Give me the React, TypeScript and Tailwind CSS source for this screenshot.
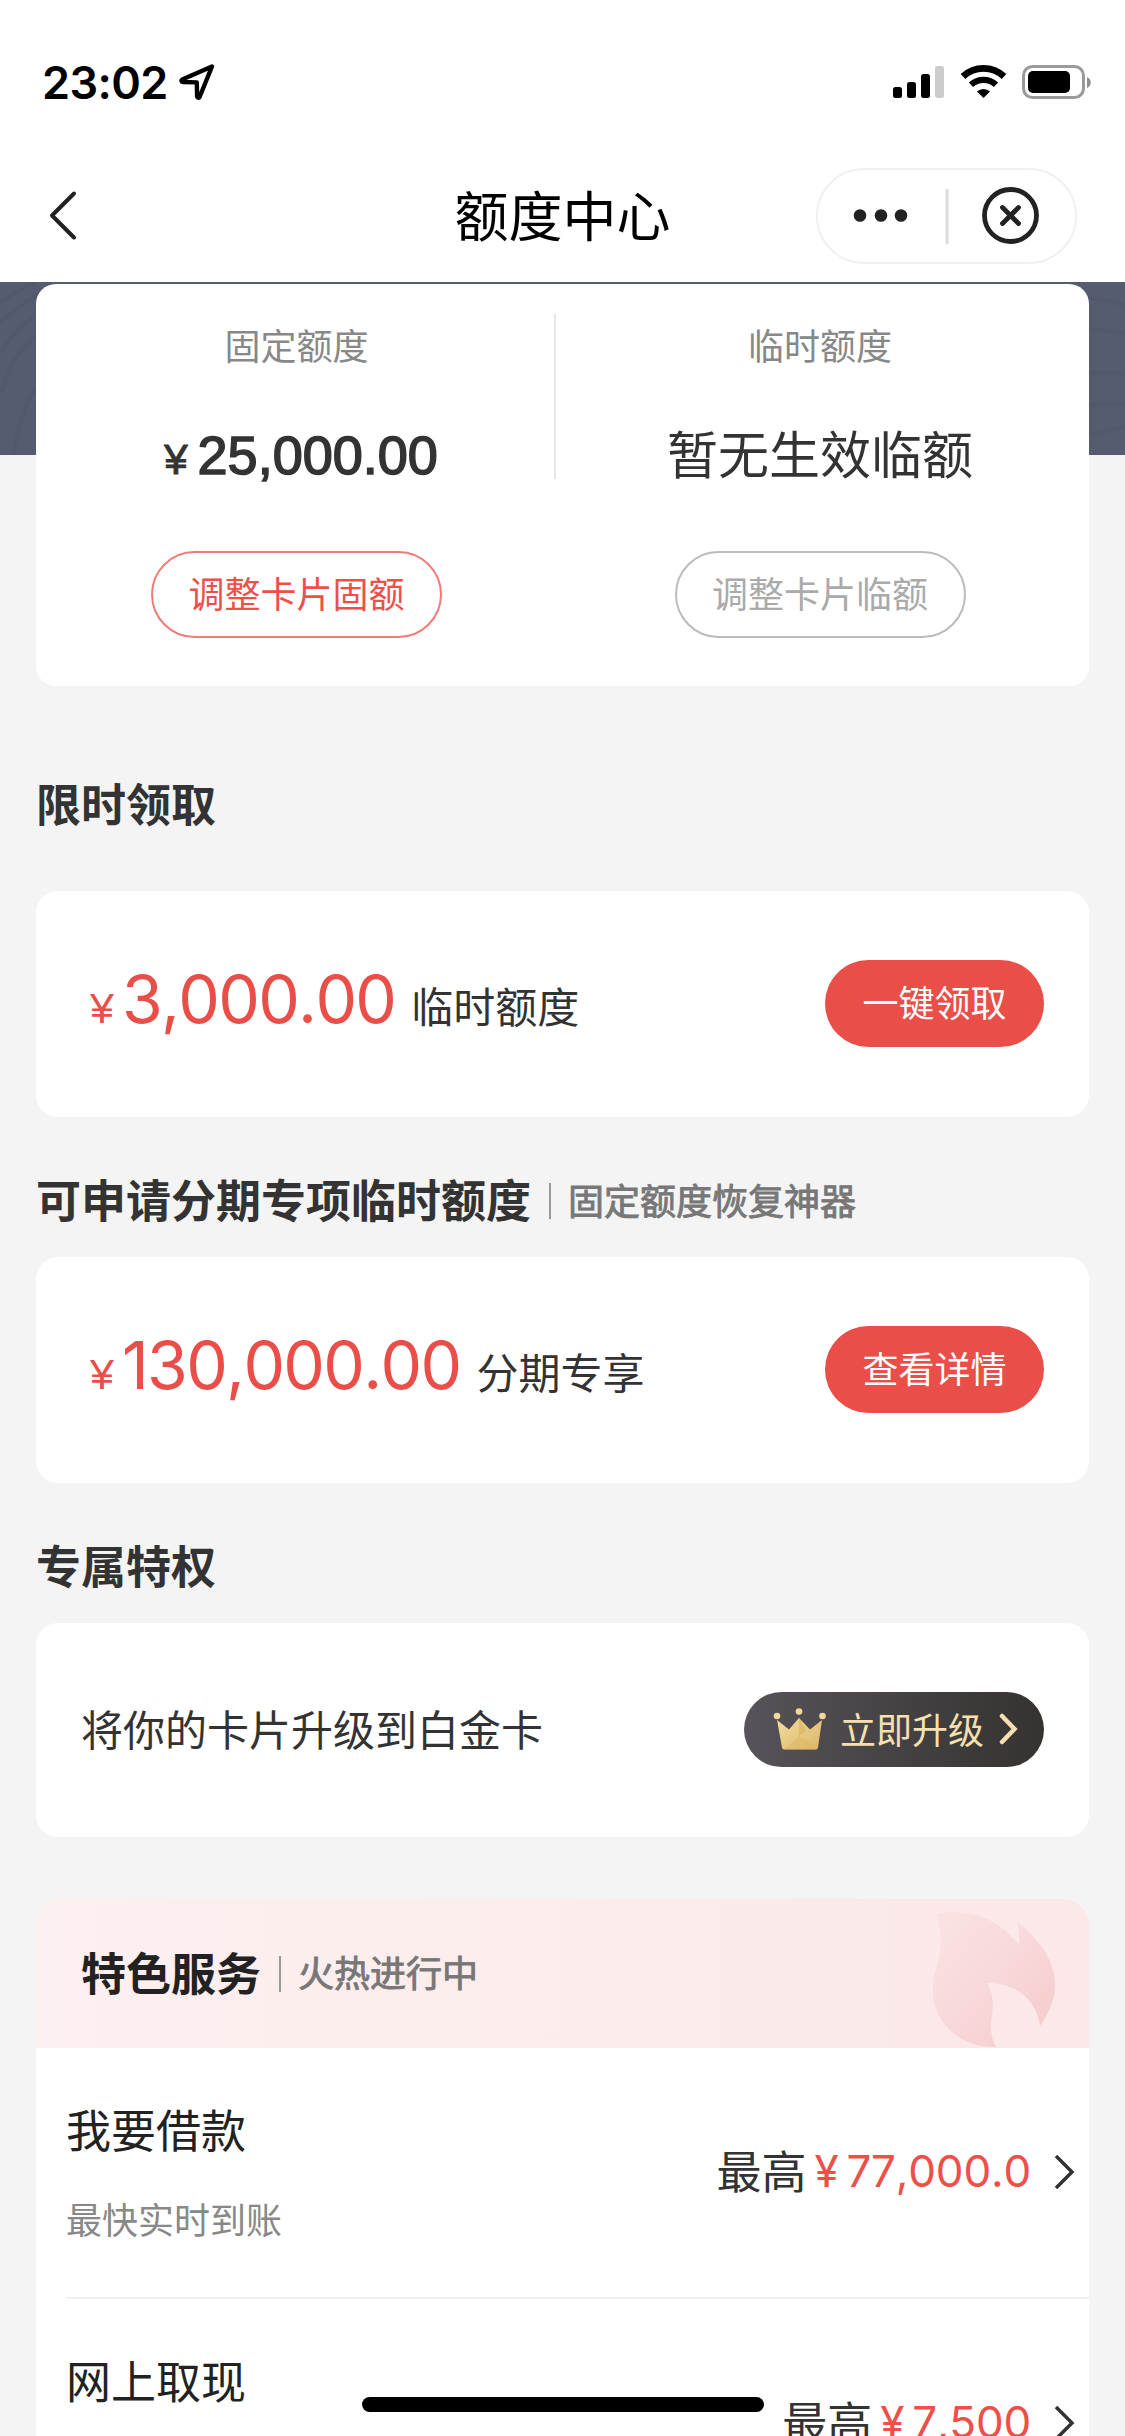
import type { ReactNode } from "react";

function StatusBar() {
  return (
    <div className="flex h-[164px] items-center justify-between pl-[42px] pr-[34px]">
      <div className="flex items-center">
        <span className="font-['Inter',sans-serif] text-[45px] font-semibold leading-none tracking-[-0.6px] text-black">
          23:02
        </span>
        <svg className="ml-[11px] h-9 w-9" viewBox="0 0 36 36" fill="none">
          <path
            d="M33 2.500 3.200 15.600c-1.200.6-.9 2.300.6 2.400l14 .4.3 14c.1 1.500 1.900 1.800 2.500.6Z"
            stroke="#000"
            strokeWidth="4.400"
            strokeLinejoin="round"
          />
        </svg>
      </div>
      <svg className="h-9 w-[200px]" viewBox="0 0 200 36">
        <rect x="2" y="23" width="9" height="11" rx="2.500" />
        <rect x="16" y="18" width="9" height="16" rx="2.500" />
        <rect x="30" y="10" width="9" height="24" rx="2.500" />
        <rect x="44" y="2" width="9" height="32" rx="2.500" fill="#ccc" />
        <g fill="none" stroke="#000">
          <path d="M72 12.500a30 30 0 0 1 41 0" strokeWidth="6.800" />
          <path d="M80 20.800a18.500 18.500 0 0 1 25 0" strokeWidth="6.200" />
        </g>
        <path d="M86 27.600a9.500 9.500 0 0 1 13 0L92.500 34Z" />
        <rect x="132.500" y="2.500" width="60" height="31" rx="9" fill="none" stroke="#9a9a9a" strokeWidth="3" />
        <rect x="137" y="7" width="42" height="22" rx="5" />
        <path d="M196 13v11c5-1.700 5-9.300 0-11Z" fill="#8f8f8f" />
      </svg>
    </div>
  );
}

function NavBar() {
  return (
    <div className="grid h-[104px] grid-cols-3 items-center px-12">
      <svg className="h-14 w-9" viewBox="0 0 36 56" fill="none">
        <path d="M26 5.500 4 27.500l22 22" stroke="#222" strokeWidth="4" strokeLinecap="round" strokeLinejoin="round" />
      </svg>
      <h1 className="pb-[5px] text-center text-[54px] leading-none text-black">额度中心</h1>
      <div className="flex h-24 w-[261px] items-center justify-self-end rounded-full border-2 border-[#f0f0f0]">
        <svg className="h-full w-full" viewBox="0 0 257 92" fill="none">
          <g fill="#222">
            <circle cx="42" cy="45.500" r="6.300" />
            <circle cx="63" cy="45.500" r="6.300" />
            <circle cx="83" cy="45.500" r="6.300" />
          </g>
          <path d="M129 20v53" stroke="#ddd" strokeWidth="3" strokeLinecap="round" />
          <circle cx="192.500" cy="45.500" r="26" stroke="#222" strokeWidth="4.800" />
          <path d="m184.500 37.500 16 16m0-16-16 16" stroke="#222" strokeWidth="4.800" strokeLinecap="round" />
        </svg>
      </div>
    </div>
  );
}

// 卡片背后的深色纹理底
function Backdrop() {
  return (
    <svg className="absolute inset-x-0 top-0 h-[173px] w-full" viewBox="0 0 1125 173" fill="none">
      <rect width="1125" height="173" fill="#565c70" />
      <g stroke="#4f556a" strokeWidth="4" opacity="0.4">
        <path d="M-4 22C10 14 20 8 36 0" />
        <path d="M-4 44C10 32 24 20 40 12" />
        <path d="M-4 76C8 58 22 42 40 30" />
        <path d="M2 110C8 84 22 64 40 52" />
        <path d="M14 173C18 146 24 122 38 104" />
        <path d="M1086 16c14 0 26 4 42 8" />
        <path d="M1086 48c16-2 28 2 42 4" />
        <path d="M1086 92c14-4 28 0 42 0" />
        <path d="M1086 124c14-4 28 0 42-2" />
        <path d="M1086 152c14 0 28-4 42-8" />
      </g>
    </svg>
  );
}

function QuotaColumn({
  label,
  children,
  button,
  buttonClass,
  className,
}: {
  label: string;
  children: ReactNode;
  button: string;
  buttonClass: string;
  className: string;
}) {
  return (
    <div className={`flex flex-col items-center ${className}`}>
      <div className="mt-[35px] h-[50px] text-[36px] leading-[50px] text-[#888]">{label}</div>
      <div className="mt-[52px] flex h-[68px] items-center whitespace-nowrap text-[#333]">{children}</div>
      <button
        className={`mt-[62px] h-[87px] w-[291px] rounded-full border-2 pb-[5px] text-[36px] leading-none ${buttonClass}`}
      >
        {button}
      </button>
    </div>
  );
}

function QuotaCard() {
  return (
    <section className="relative pl-9 pt-0.5">
      <Backdrop />
      <div className="relative flex h-[402px] w-[1053px] rounded-[20px] bg-white">
        <QuotaColumn
          label="固定额度"
          button="调整卡片固额"
          buttonClass="border-[#ee4f49]/75 text-[#ee4f49]"
          className="w-[518px] pl-[3px]"
        >
          <span className="flex items-baseline pl-[9px] font-['Liberation_Sans',sans-serif] leading-none">
            <span className="text-[42px] [-webkit-text-stroke:1px_#333]">¥</span>
            <span className="ml-2.5 text-[54px] [-webkit-text-stroke:1.6px_#333]">25,000.00</span>
          </span>
        </QuotaColumn>
        <div className="mt-[30px] h-[165px] w-0.5 bg-[#e6e6e6]" />
        <QuotaColumn
          label="临时额度"
          button="调整卡片临额"
          buttonClass="border-[#aaa]/80 text-[#aaa]"
          className="w-[528px]"
        >
          <span className="pb-[5px] text-[51px] leading-none">暂无生效临额</span>
        </QuotaColumn>
      </div>
    </section>
  );
}

function Heading({ title, sub, dark }: { title: string; sub?: string; dark?: boolean }) {
  return (
    <div className="flex items-center">
      <h2 className={`pb-1 text-[45px] font-semibold leading-[60px] ${dark ? "text-[#222]" : "text-[#333]"}`}>{title}</h2>
      {sub && (
        <>
          <div className="ml-[18px] h-9 w-0.5 bg-[#999]" />
          <span className="ml-[17px] pb-[5px] text-[36px] leading-[50px] text-[#777] [-webkit-text-stroke:0.9px_#777]">{sub}</span>
        </>
      )}
    </div>
  );
}

function AmountCard({ amount, desc, action }: { amount: string; desc: string; action: string }) {
  return (
    <div className="flex h-[226px] items-center justify-between rounded-[22px] bg-white pl-[54px] pr-[45px]">
      <div className="flex items-baseline pb-px">
        <span className="font-['Liberation_Sans',sans-serif] text-[43px] text-[#ea4e48]">¥</span>
        <span className="ml-2 font-['Inter',sans-serif] text-[66px] font-[385] leading-none tracking-[-1.7px] text-[#ea4e48] [font-kerning:none]">
          {amount}
        </span>
        <span className="ml-4 text-[42px] leading-none text-[#333]">{desc}</span>
      </div>
      <button className="mb-0.5 h-[87px] w-[219px] rounded-full bg-[#e94e48] pb-1 text-[36px] leading-none text-white">
        {action}
      </button>
    </div>
  );
}

function Crown() {
  return (
    <svg className="h-[42px] w-[54px]" viewBox="0 0 54 42">
      <defs>
        <linearGradient id="crown" x1="0" y1="0" x2="1" y2="1">
          <stop offset="0" stopColor="#f4dd9f" />
          <stop offset="1" stopColor="#dcb565" />
        </linearGradient>
      </defs>
      <path d="m4 12 12 9.500L26 10l11 11.500L49 12l-4 27.500q-.3 2-2 2H11q-1.700 0-2-2Z" fill="url(#crown)" />
      <path d="m26 10 7 13-7 5Z" fill="#e0bb6c" />
      <path d="m26 28 19 11.500q-.3 2-2 2H11Z" fill="#d9b361" opacity="0.4" />
      <circle cx="4" cy="8" r="3.300" fill="#f2d99b" />
      <circle cx="26" cy="3.500" r="3.300" fill="#f2d99b" />
      <circle cx="49.500" cy="8" r="3.300" fill="#f2d99b" />
    </svg>
  );
}

function UpgradeCard() {
  return (
    <div className="flex h-[214px] items-center justify-between rounded-[22px] bg-white px-[45px]">
      <span className="pb-1 text-[42px] leading-[58px] text-[#333]">将你的卡片升级到白金卡</span>
      <button className="mb-0.5 flex h-[75px] w-[300px] items-center rounded-full bg-linear-to-r from-[#57535a] to-[#353230] pl-[29px] text-[#f6e0b0]">
        <Crown />
        <span className="ml-[13px] pb-[3px] text-[36px] leading-none">立即升级</span>
        <svg className="ml-[15px] h-9 w-5" viewBox="0 0 20 36" fill="none">
          <path d="m3 5 12.500 13L3 31" stroke="#f6e0b0" strokeWidth="4.500" strokeLinecap="round" />
        </svg>
      </button>
    </div>
  );
}

function Flame() {
  return (
    <svg className="mr-[33px] h-[136px] w-[124px] self-end" viewBox="0 0 124 136">
      <defs>
        <linearGradient id="flame" x1="0" y1="0" x2="1" y2="1">
          <stop offset="0" stopColor="#fae3e4" />
          <stop offset="0.500" stopColor="#f8d8da" />
          <stop offset="1" stopColor="#f5cac8" />
        </linearGradient>
      </defs>
      <path
        d="M4 2C38-5 68 8 87 33c1-8 0-15-2-23 23 17 40 42 38 66-1 14-7 26-15 38-4-27-24-43-53-43 8 14 6 26 4 39-1 9 1 17 5 25C24 136-2 106 1 73 3 51 16 35 4 2Z"
        fill="url(#flame)"
      />
    </svg>
  );
}

const services = [
  { name: "我要借款", desc: "最快实时到账", amount: "77,000.0" },
  { name: "网上取现", desc: "", amount: "7,500" },
];

function ServiceCard() {
  return (
    <div className="overflow-hidden rounded-t-[26px] bg-white">
      <div className="flex h-[149px] items-center justify-between bg-linear-to-r from-[#fdf0f0] to-[#fbe8e8] pl-[45px]">
        <Heading title="特色服务" sub="火热进行中" dark />
        <Flame />
      </div>
      {services.map((s) => (
        <div key={s.name} className="ml-[30px] flex h-[251px] justify-between border-b-2 border-[#f0f0f0] pr-3.5">
          <div className="pt-[49px]">
            <div className="text-[45px] leading-[64px] text-[#222]">{s.name}</div>
            <div className="mt-8 text-[36px] leading-[50px] text-[#888]">{s.desc}</div>
          </div>
          <div className="flex items-center">
            <span className="pb-[5px] text-[45px] leading-[64px] text-[#333]">最高</span>
            <span className="ml-2 pb-[3px] font-['Inter',sans-serif] text-[44px] font-[370] leading-[64px] tracking-[-0.2px] text-[#ee4f49] [font-kerning:none]">
              ¥<span className="ml-2">{s.amount}</span>
            </span>
            <svg className="ml-[22px] h-9 w-[22px] -translate-y-px" viewBox="0 0 22 36" fill="none">
              <path d="m3 2 16 16L3 34" stroke="#333" strokeWidth="3.500" />
            </svg>
          </div>
        </div>
      ))}
    </div>
  );
}

export default function App() {
  return (
    <div className="relative h-[2436px] w-[1125px] overflow-hidden bg-[#f4f4f4] font-['Noto_Sans_CJK_SC',sans-serif]">
      <header className="h-[282px] bg-white">
        <StatusBar />
        <NavBar />
      </header>
      <QuotaCard />
      <main className="px-9">
        <div className="pb-[54px] pt-[87px]">
          <Heading title="限时领取" />
        </div>
        <AmountCard amount="3,000.00" desc="临时额度" action="一键领取" />
        <div className="pb-6 pt-[52px]">
          <Heading title="可申请分期专项临时额度" sub="固定额度恢复神器" />
        </div>
        <AmountCard amount="130,000.00" desc="分期专享" action="查看详情" />
        <div className="pb-6 pt-[52px]">
          <Heading title="专属特权" />
        </div>
        <UpgradeCard />
        <div className="pt-[62px]">
          <ServiceCard />
        </div>
      </main>
      <div className="absolute bottom-6 left-[362px] h-[15px] w-[402px] rounded-full bg-black" />
    </div>
  );
}
